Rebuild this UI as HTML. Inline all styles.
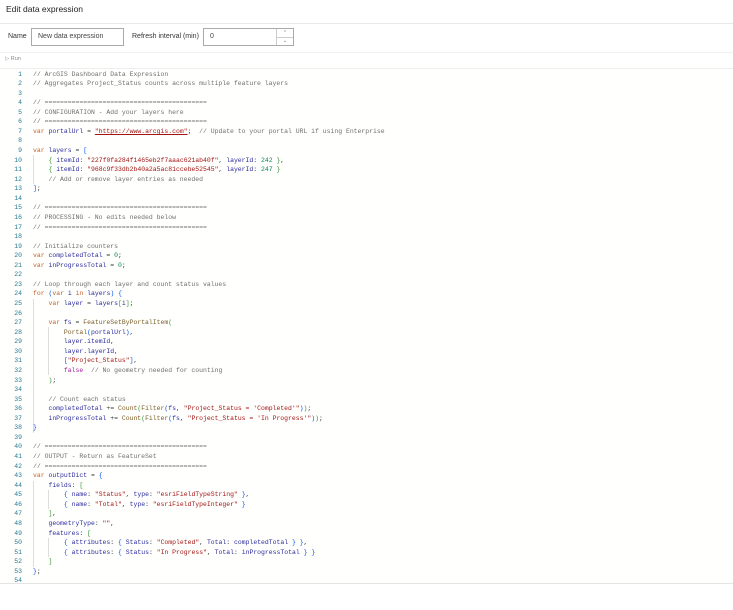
<!DOCTYPE html>
<html><head><meta charset="utf-8"><style>
*{margin:0;padding:0;box-sizing:border-box}
body{width:733px;height:610px;background:#fff;font-family:"Liberation Sans",sans-serif;color:#323232;position:relative;overflow:hidden}
.title{position:absolute;left:6px;top:4px;font-size:8.5px;color:#222}
.sep1{position:absolute;left:0;right:0;top:23px;border-top:1px solid #e8e8e8}
.lbl{position:absolute;font-size:7px;color:#333}
.inp{position:absolute;border:1px solid #aaa;background:#fff;font-size:7px;color:#444;padding-left:6px;line-height:16px;height:18px}
.sep2{position:absolute;left:0;right:0;top:52px;border-top:1px solid #f0f0f0}
.run{position:absolute;left:5px;top:56px;font-size:5.5px;color:#888}
.code{position:absolute;left:0;right:0;top:68px;height:516px;background:#fffffd;border-top:1px solid #eee;border-bottom:1px solid #e4e4e4}
pre{position:absolute;left:33px;top:0.5px;font-family:"Liberation Mono",monospace;font-size:6.45px;line-height:9.57px;color:#333}
.ln{position:absolute;left:0;width:22px;text-align:right;top:0.5px;font-family:"Liberation Mono",monospace;font-size:6.45px;line-height:9.57px;color:#237893}
.c{color:#6e7070}.k{color:#c8622a}.v{color:#2c2ca0}.s{color:#a31515}.b{color:#0451e5}.g{color:#319331}.n{color:#098658}.f{color:#795e26}
.guide{position:absolute;border-left:1px solid #ddd;width:0}
</style></head><body>
<div class="title">Edit data expression</div>
<div class="sep1"></div>
<div class="lbl" style="left:8px;top:33px">Name</div>
<div class="inp" style="left:31px;top:28px;width:93px">New data expression</div>
<div class="lbl" style="left:132px;top:33px">Refresh interval (min)</div>
<div class="inp" style="left:203px;top:28px;width:91px">0</div>
<div style="position:absolute;left:276px;top:29px;width:17px;height:16px;border-left:1px solid #ccc;font-size:5px;color:#666;text-align:center;line-height:8px">⌃<br>⌄</div>
<div style="position:absolute;left:276px;top:37px;width:17px;border-top:1px solid #ccc"></div>
<div class="sep2"></div>
<div class="run">▷ Run</div>
<div class="code">
<div class="ln">1<br>2<br>3<br>4<br>5<br>6<br>7<br>8<br>9<br>10<br>11<br>12<br>13<br>14<br>15<br>16<br>17<br>18<br>19<br>20<br>21<br>22<br>23<br>24<br>25<br>26<br>27<br>28<br>29<br>30<br>31<br>32<br>33<br>34<br>35<br>36<br>37<br>38<br>39<br>40<br>41<br>42<br>43<br>44<br>45<br>46<br>47<br>48<br>49<br>50<br>51<br>52<br>53<br>54</div>
<div class="guide" style="left:33px;top:86px;height:29px"></div>
<div class="guide" style="left:33px;top:230px;height:134px"></div>
<div class="guide" style="left:48px;top:258px;height:48px"></div>
<div class="guide" style="left:33px;top:412px;height:86px"></div>
<div class="guide" style="left:48px;top:421px;height:19px"></div>
<div class="guide" style="left:48px;top:469px;height:19px"></div>
<pre><span class="c">// ArcGIS Dashboard Data Expression</span>
<span class="c">// Aggregates Project_Status counts across multiple feature layers</span>

<span class="c">// ==========================================</span>
<span class="c">// CONFIGURATION - Add your layers here</span>
<span class="c">// ==========================================</span>
<span class="k">var</span> <span class="v">portalUrl</span> = <span class="s" style="text-decoration:underline">"https://www.arcgis.com"</span>;  <span class="c">// Update to your portal URL if using Enterprise</span>

<span class="k">var</span> <span class="v">layers</span> = <span class="b">[</span>
    <span class="g">{</span> <span class="v">itemId</span>: <span class="s">"227f0fa284f1465eb2f7aaac621ab40f"</span>, <span class="v">layerId</span>: <span class="n">242</span> <span class="g">}</span>,
    <span class="g">{</span> <span class="v">itemId</span>: <span class="s">"968c9f33db2b40a2a5ac81ccebe52545"</span>, <span class="v">layerId</span>: <span class="n">247</span> <span class="g">}</span>
    <span class="c">// Add or remove layer entries as needed</span>
<span class="b">]</span>;

<span class="c">// ==========================================</span>
<span class="c">// PROCESSING - No edits needed below</span>
<span class="c">// ==========================================</span>

<span class="c">// Initialize counters</span>
<span class="k">var</span> <span class="v">completedTotal</span> = <span class="n">0</span>;
<span class="k">var</span> <span class="v">inProgressTotal</span> = <span class="n">0</span>;

<span class="c">// Loop through each layer and count status values</span>
<span class="k">for</span> <span class="b">(</span><span class="k">var</span> <span class="v">i</span> <span class="k">in</span> <span class="v">layers</span><span class="b">)</span> <span class="b">{</span>
    <span class="k">var</span> <span class="v">layer</span> = <span class="v">layers</span><span class="g">[</span><span class="v">i</span><span class="g">]</span>;

    <span class="k">var</span> <span class="v">fs</span> = <span class="f">FeatureSetByPortalItem</span><span class="g">(</span>
        <span class="f">Portal</span><span class="b">(</span><span class="v">portalUrl</span><span class="b">)</span>,
        <span class="v">layer</span>.<span class="v">itemId</span>,
        <span class="v">layer</span>.<span class="v">layerId</span>,
        <span class="b">[</span><span class="s">"Project_Status"</span><span class="b">]</span>,
        <span class="k" style="color:#a020a0">false</span>  <span class="c">// No geometry needed for counting</span>
    <span class="g">)</span>;

    <span class="c">// Count each status</span>
    <span class="v">completedTotal</span> += <span class="f">Count</span><span class="g">(</span><span class="f">Filter</span><span class="b">(</span><span class="v">fs</span>, <span class="s">"Project_Status = 'Completed'"</span><span class="b">)</span><span class="g">)</span>;
    <span class="v">inProgressTotal</span> += <span class="f">Count</span><span class="g">(</span><span class="f">Filter</span><span class="b">(</span><span class="v">fs</span>, <span class="s">"Project_Status = 'In Progress'"</span><span class="b">)</span><span class="g">)</span>;
<span class="b">}</span>

<span class="c">// ==========================================</span>
<span class="c">// OUTPUT - Return as FeatureSet</span>
<span class="c">// ==========================================</span>
<span class="k">var</span> <span class="v">outputDict</span> = <span class="b">{</span>
    <span class="v">fields</span>: <span class="g">[</span>
        <span class="b">{</span> <span class="v">name</span>: <span class="s">"Status"</span>, <span class="v">type</span>: <span class="s">"esriFieldTypeString"</span> <span class="b">}</span>,
        <span class="b">{</span> <span class="v">name</span>: <span class="s">"Total"</span>, <span class="v">type</span>: <span class="s">"esriFieldTypeInteger"</span> <span class="b">}</span>
    <span class="g">]</span>,
    <span class="v">geometryType</span>: <span class="s">""</span>,
    <span class="v">features</span>: <span class="g">[</span>
        <span class="b">{</span> <span class="v">attributes</span>: <span class="b">{</span> <span class="v">Status</span>: <span class="s">"Completed"</span>, <span class="v">Total</span>: <span class="v">completedTotal</span> <span class="b">}</span> <span class="b">}</span>,
        <span class="b">{</span> <span class="v">attributes</span>: <span class="b">{</span> <span class="v">Status</span>: <span class="s">"In Progress"</span>, <span class="v">Total</span>: <span class="v">inProgressTotal</span> <span class="b">}</span> <span class="b">}</span>
    <span class="g">]</span>
<span class="b">}</span>;
</pre>
</div>
</body></html>
